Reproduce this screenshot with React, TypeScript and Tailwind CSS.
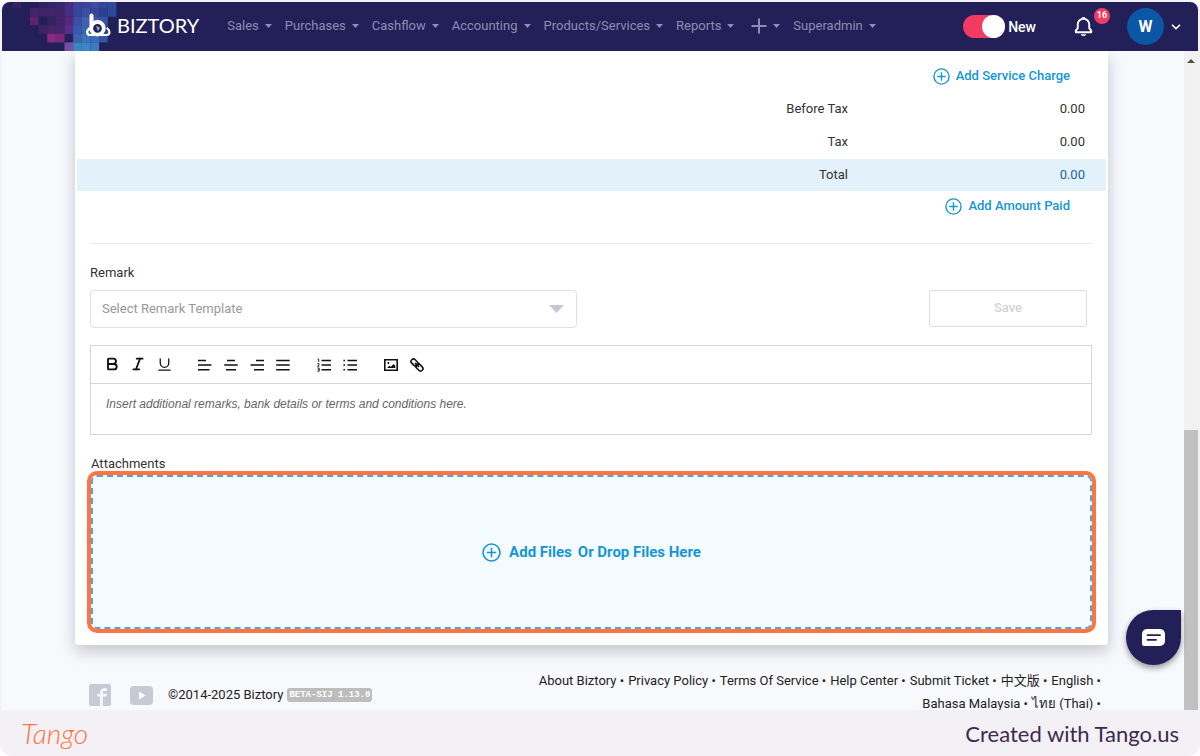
import { BiBell } from "react-icons/bi";
import { ImFacebook2 } from "react-icons/im";
import { Bold, ChevronDown, Italic, Underline } from "lucide-react";
import type { ReactNode } from "react";

const menus = ["Sales", "Purchases", "Cashflow", "Accounting", "Products/Services", "Reports"];

const footerLinks = [
  "About Biztory",
  "Privacy Policy",
  "Terms Of Service",
  "Help Center",
  "Submit Ticket",
  "中文版",
  "English",
  "Bahasa Malaysia",
  "ไทย (Thai)",
];

// one string per cell, "." leaves the header colour
const mosaic = [
  [".", "#33235f", ".", ".", "#2c225f", "#35246a", "#37266e", "#42307f", "#3d4495", "#3a4596", "#3f4ca2", "#33479a", "#30499a"],
  [".", ".", ".", "#45246a", "#3e2465", "#44256a", "#3d2568", "#4a2c82", "#35479b", "#3a4fa5", "#35479b", "#2d3f8d", "#2f4a9a"],
  [".", ".", ".", "#5a2568", ".", "#35235f", "#44256c", "#53297e", "#3b4ea3", "#4160b0", "#3c57a9", "#3553a2", "."],
  [".", ".", ".", ".", "#3e2463", "#4a2468", "#46266f", "#5b2d8b", "#3a5aab", "#3c66b4", "#3c5fae", "#33479a", "."],
  [".", ".", ".", ".", ".", "#8b2a7c", "#7a2a78", ".", "#3d62b0", "#3b74bb", "#3c6cb8", "#3652a3", "."],
  [".", ".", ".", ".", ".", ".", ".", "#7450a4", "#3d84c4", "#3a86c6", "#3b7cc0", ".", "."],
];

function Logo() {
  return (
    <div className="flex h-full items-center">
      <svg className="h-full w-[115px] shrink-0" viewBox="0 0 115 49">
        {mosaic.map((row, r) =>
          row.map((color, c) =>
            color === "." ? null : (
              <rect
                key={`${r}-${c}`}
                x={2 + c * 8.64}
                y={r === 0 ? 0 : 6 + (r - 1) * 8.6}
                width={8.7}
                height={r === 0 ? 6 : 8.7}
                fill={color}
              />
            ),
          ),
        )}
        <path d="M89.500 13.500v14" stroke="#fff" strokeWidth="4" strokeLinecap="round" />
        <path
          d="M87.500 26.500c-4 3-2.500 6.500 1 6.500h16c3.500 0 4-4 1-6.500"
          fill="none"
          stroke="#fff"
          strokeWidth="2.200"
          strokeLinecap="round"
        />
        <circle cx="95.500" cy="26.300" r="6.300" fill="#23205a" stroke="#fff" strokeWidth="3.800" />
        <path d="M94 24l4 1.500-2 4z" fill="#8fa5d8" />
      </svg>
      <span className="pb-1 font-['Lato'] text-xl text-white">BIZTORY</span>
    </div>
  );
}

function Caret() {
  return (
    <svg width="7" height="4" viewBox="0 0 7 4" fill="currentColor">
      <path d="M0 0h7L3.500 4z" />
    </svg>
  );
}

function MenuItem({ children, label }: { children: ReactNode; label?: string }) {
  return (
    <button type="button" aria-label={label} className="flex items-center gap-[6px] whitespace-nowrap">
      {children}
      <Caret />
    </button>
  );
}

function Header() {
  return (
    <header className="flex h-[49px] shrink-0 items-center rounded-t-lg bg-[#231f58] pr-[15px]">
      <Logo />
      <nav className="ml-7 flex items-center gap-[13px] pb-[2px] text-[13px] text-[#8f8db1]">
        {menus.map((name) => (
          <MenuItem key={name}>{name}</MenuItem>
        ))}
        <div className="ml-1">
          <MenuItem label="Create new">
            <svg width="16" height="16" viewBox="0 0 16 16" stroke="currentColor" strokeWidth="2">
              <path d="M8 .5v15M.5 8h15" />
            </svg>
          </MenuItem>
        </div>
        <MenuItem>Superadmin</MenuItem>
      </nav>
      <label className="ml-auto flex cursor-pointer items-center gap-[3px] text-sm font-medium text-white">
        <input type="checkbox" role="switch" defaultChecked className="peer sr-only" />
        <span className="flex h-[23px] w-[42px] rounded-full bg-gray-400 peer-checked:justify-end peer-checked:bg-[#f23a63]">
          <span className="size-[23px] rounded-full bg-white" />
        </span>
        New
      </label>
      <button type="button" aria-label="Notifications" className="relative ml-9 text-white">
        <BiBell size={23} />
        <span className="absolute -top-[7px] left-[22px] flex size-4 items-center justify-center rounded-full bg-[#f23a63] text-[9px] font-bold">
          16
        </span>
      </button>
      <button type="button" aria-label="Account" className="ml-8 flex items-center gap-[5px] text-white">
        <span className="flex size-[37px] items-center justify-center rounded-full bg-[#0b56a5] text-base font-bold">
          W
        </span>
        <ChevronDown size={14} strokeWidth={3} />
      </button>
    </header>
  );
}

function PlusCircle({ size = 17 }: { size?: number }) {
  return (
    <svg width={size} height={size} viewBox="0 0 17 17" fill="none" stroke="currentColor" strokeWidth="1.400">
      <circle cx="8.500" cy="8.500" r="7.600" />
      <path d="M8.500 4.300v8.400M4.300 8.500h8.400" />
    </svg>
  );
}

function AddButton({ children }: { children: ReactNode }) {
  return (
    <button type="button" className="flex items-center gap-[6px] font-medium text-[#1496d8]">
      <PlusCircle />
      {children}
    </button>
  );
}

function Totals() {
  return (
    <div className="px-[2px] pt-2">
      <div className="flex h-[34px] items-center justify-end pr-9">
        <AddButton>Add Service Charge</AddButton>
      </div>
      <table className="w-full text-right">
        <tbody>
          <tr className="h-[33px]">
            <th className="pb-[2px] font-normal">Before Tax</th>
            <td className="w-[258px] pr-[21px] pb-[2px]">0.00</td>
          </tr>
          <tr className="h-[33px]">
            <th className="pb-[2px] font-normal">Tax</th>
            <td className="pr-[21px] pb-[2px]">0.00</td>
          </tr>
          <tr className="h-8 bg-[#e3f2fa]">
            <th className="font-normal">Total</th>
            <td className="pr-[21px] text-[#20639f]">0.00</td>
          </tr>
        </tbody>
      </table>
      <div className="flex h-[30px] items-center justify-end pr-9">
        <AddButton>Add Amount Paid</AddButton>
      </div>
    </div>
  );
}

function Lines({ d, children }: { d: string; children?: ReactNode }) {
  return (
    <svg width="14" height="14" viewBox="0 0 14 14" fill="none" stroke="currentColor" strokeWidth="1.600">
      <path d={d} />
      {children}
    </svg>
  );
}

function LinkIcon() {
  return (
    <svg width="14" height="14" viewBox="0 0 14 14" fill="none" stroke="currentColor" strokeWidth="1.600">
      <rect x=".6" y="2.200" width="8" height="4.800" rx="2.400" transform="rotate(45 4.600 4.600)" />
      <rect x="5.400" y="7" width="8" height="4.800" rx="2.400" transform="rotate(45 9.400 9.400)" />
      <path d="M5 5l4 4" />
    </svg>
  );
}

const tools: { label: string; icon: ReactNode }[][] = [
  [
    { label: "Bold", icon: <Bold size={16} strokeWidth={2.8} /> },
    { label: "Italic", icon: <Italic size={16} strokeWidth={2.6} /> },
    { label: "Underline", icon: <Underline size={17} strokeWidth={1.8} /> },
  ],
  [
    { label: "Align left", icon: <Lines d="M0 2.500h8M0 7h13.500M0 11.800h11.500" /> },
    { label: "Align center", icon: <Lines d="M3 2.500h8M.2 7h13.500M2 11.800h10" /> },
    { label: "Align right", icon: <Lines d="M6 2.500h8M.5 7H14M4 11.800h10" /> },
    { label: "Justify", icon: <Lines d="M.2 2.500h13.500M.2 7h13.500M.2 11.800h13.500" /> },
  ],
  [
    {
      label: "Numbered list",
      icon: (
        <Lines d="M4.500 2.500H14M4.500 7H14M4.500 11.800H14">
          <path
            strokeWidth=".9"
            d="M.5 1h1.200v3M.3 5.700h1.800v1L.5 8.200h1.900M.4 10h1.800v3.200H.4M.8 11.600h1.400"
          />
        </Lines>
      ),
    },
    {
      label: "Bulleted list",
      icon: <Lines d="M4.500 2.500H14M4.500 7H14M4.500 11.800H14M.4 2.500H2M.4 7H2M.4 11.800H2" />,
    },
  ],
  [
    {
      label: "Insert image",
      icon: (
        <Lines d="M.8 1.800h12.400v10.400H.8z">
          <path d="M3 10l2.300-2.300 1.500 1L9.500 6l1.800 1.800V10z" fill="currentColor" stroke="none" />
          <circle cx="4.300" cy="5" r="1" fill="currentColor" stroke="none" />
        </Lines>
      ),
    },
    { label: "Insert link", icon: <LinkIcon /> },
  ],
];

function Remark() {
  return (
    <section className="mt-[22px] mr-4 ml-[15px] border-t border-[#e9e9ea] pt-[19px]">
      <label htmlFor="remark-template" className="block leading-5">
        Remark
      </label>
      <div className="mt-[7px] flex items-start justify-between pr-[5px]">
        <div className="relative w-[487px]">
          <select
            id="remark-template"
            className="h-[38px] w-full appearance-none rounded border border-[#dfe0e2] bg-white px-[11px] text-[#999]"
          >
            <option>Select Remark Template</option>
          </select>
          <svg
            className="pointer-events-none absolute top-[15px] right-[13px]"
            width="15"
            height="8"
            viewBox="0 0 15 8"
            fill="#c3c8d2"
          >
            <path d="M0 0h15L7.500 8z" />
          </svg>
        </div>
        <button
          type="button"
          disabled
          className="h-[37px] w-[158px] rounded-[3px] border border-[#dcdddf] pb-[2px] font-medium text-[#d3d4d6]"
        >
          Save
        </button>
      </div>
      <div className="mt-[17px] border border-[#d5d6d8]">
        <div className="flex h-[38px] items-center gap-[15px] border-b border-[#d5d6d8] pl-2 text-[#111]">
          {tools.map((group, i) => (
            <div key={i} className="flex">
              {group.map((tool) => (
                <button
                  key={tool.label}
                  type="button"
                  aria-label={tool.label}
                  className="flex w-[26px] justify-center"
                >
                  {tool.icon}
                </button>
              ))}
            </div>
          ))}
        </div>
        <textarea
          aria-label="Remark"
          className="block h-[50px] w-full resize-none px-[15px] py-[10px] font-['Liberation_Sans',sans-serif] text-xs leading-5 placeholder:text-[#666] placeholder:italic"
          placeholder="Insert additional remarks, bank details or terms and conditions here."
        />
      </div>
    </section>
  );
}

function Attachments() {
  return (
    <section className="mx-4 mt-[19px] pb-4">
      <label htmlFor="attachments" className="block leading-5">
        Attachments
      </label>
      <label className="relative mt-[1px] flex h-[154px] cursor-pointer items-center justify-center rounded-md border-2 border-dashed border-[#52a5d4] bg-[#f3fbff] text-[15px] font-bold text-[#1496d8] outline-4 outline-[#ff7442]">
        <input id="attachments" type="file" multiple className="sr-only" />
        <PlusCircle size={19} />
        <span className="ml-2">Add Files</span>
        <span className="ml-[6px]">Or Drop Files Here</span>
      </label>
    </section>
  );
}

function PageFooter() {
  return (
    <footer className="mt-6 mr-[83px] ml-[87px] flex items-start justify-between">
      <div className="flex items-center pt-[15px] text-[#222]">
        <a href="#facebook" aria-label="Facebook" className="text-[#c5cad3]">
          <ImFacebook2 size={22} />
        </a>
        <a href="#youtube" aria-label="YouTube" className="ml-[19px]">
          <svg width="23" height="19" viewBox="0 0 23 19">
            <rect width="23" height="19" rx="4" fill="#c5cad3" />
            <path d="M9 5.500v8l6.500-4z" fill="#fff" />
          </svg>
        </a>
        <span className="ml-[15px]">©2014-2025 Biztory</span>
        <span className="ml-1 rounded-[3px] bg-[#bdbdbd] px-[2px] font-['Liberation_Mono',monospace] text-[9px] leading-[14px] font-bold text-white">
          BETA-SIJ 1.13.0
        </span>
      </div>
      <ul className="flex w-[570px] flex-wrap justify-end text-[#222]">
        {footerLinks.map((link) => (
          <li key={link} className="ml-1 leading-[23px] whitespace-nowrap">
            <a href="#">{link}</a> •
          </li>
        ))}
      </ul>
    </footer>
  );
}

function ScrollRail() {
  return (
    <div className="flex w-[14px] shrink-0 flex-col items-center justify-between bg-[#f1f1f1] pt-2">
      <svg width="8" height="4" viewBox="0 0 8 4" fill="#505050">
        <path d="M4 0l4 4H0z" />
      </svg>
      <div className="h-[43%] w-full bg-[#c1c1c1]" />
    </div>
  );
}

export default function App() {
  return (
    <div className="flex h-screen flex-col rounded-xl bg-[#f3f1f6] pt-[2px] font-['Roboto','Noto_Sans_CJK_SC',sans-serif] text-[13px] text-[#333]">
      <div className="mx-[2px] flex min-h-0 flex-1 flex-col">
        <Header />
        <div className="relative flex min-h-0 flex-1 bg-[#f8f9fd]">
          <main className="flex-1 overflow-hidden">
            <div className="mr-[76px] ml-[73px] rounded-b bg-white shadow-[0_6px_16px_rgba(40,40,50,0.25)]">
              <Totals />
              <Remark />
              <Attachments />
            </div>
            <PageFooter />
          </main>
          <ScrollRail />
          <button
            type="button"
            aria-label="Open chat"
            className="absolute right-[17px] bottom-[45px] flex size-[55px] items-center justify-center rounded-full rounded-tr-md bg-[#231f58] shadow-[0_3px_6px_rgba(0,0,0,0.4)]"
          >
            <svg width="23" height="17" viewBox="0 0 23 17">
              <path d="M5 0h13a5 5 0 0 1 5 5v7a5 5 0 0 1-5 5H2a2 2 0 0 1-2-2V5a5 5 0 0 1 5-5z" fill="#fff" />
              <path d="M5.500 6.200h12.500M5.500 10.800h8.500" stroke="#231f58" strokeWidth="1.800" strokeLinecap="round" />
            </svg>
          </button>
        </div>
      </div>
      <div className="flex h-[46px] shrink-0 items-center justify-between px-[21px] font-['Lato']">
        <a href="#tango" className="text-[28px] font-light text-[#ff7442] italic">
          Tango
        </a>
        <span className="text-[22px] text-[#3d2a50]">Created with Tango.us</span>
      </div>
    </div>
  );
}
